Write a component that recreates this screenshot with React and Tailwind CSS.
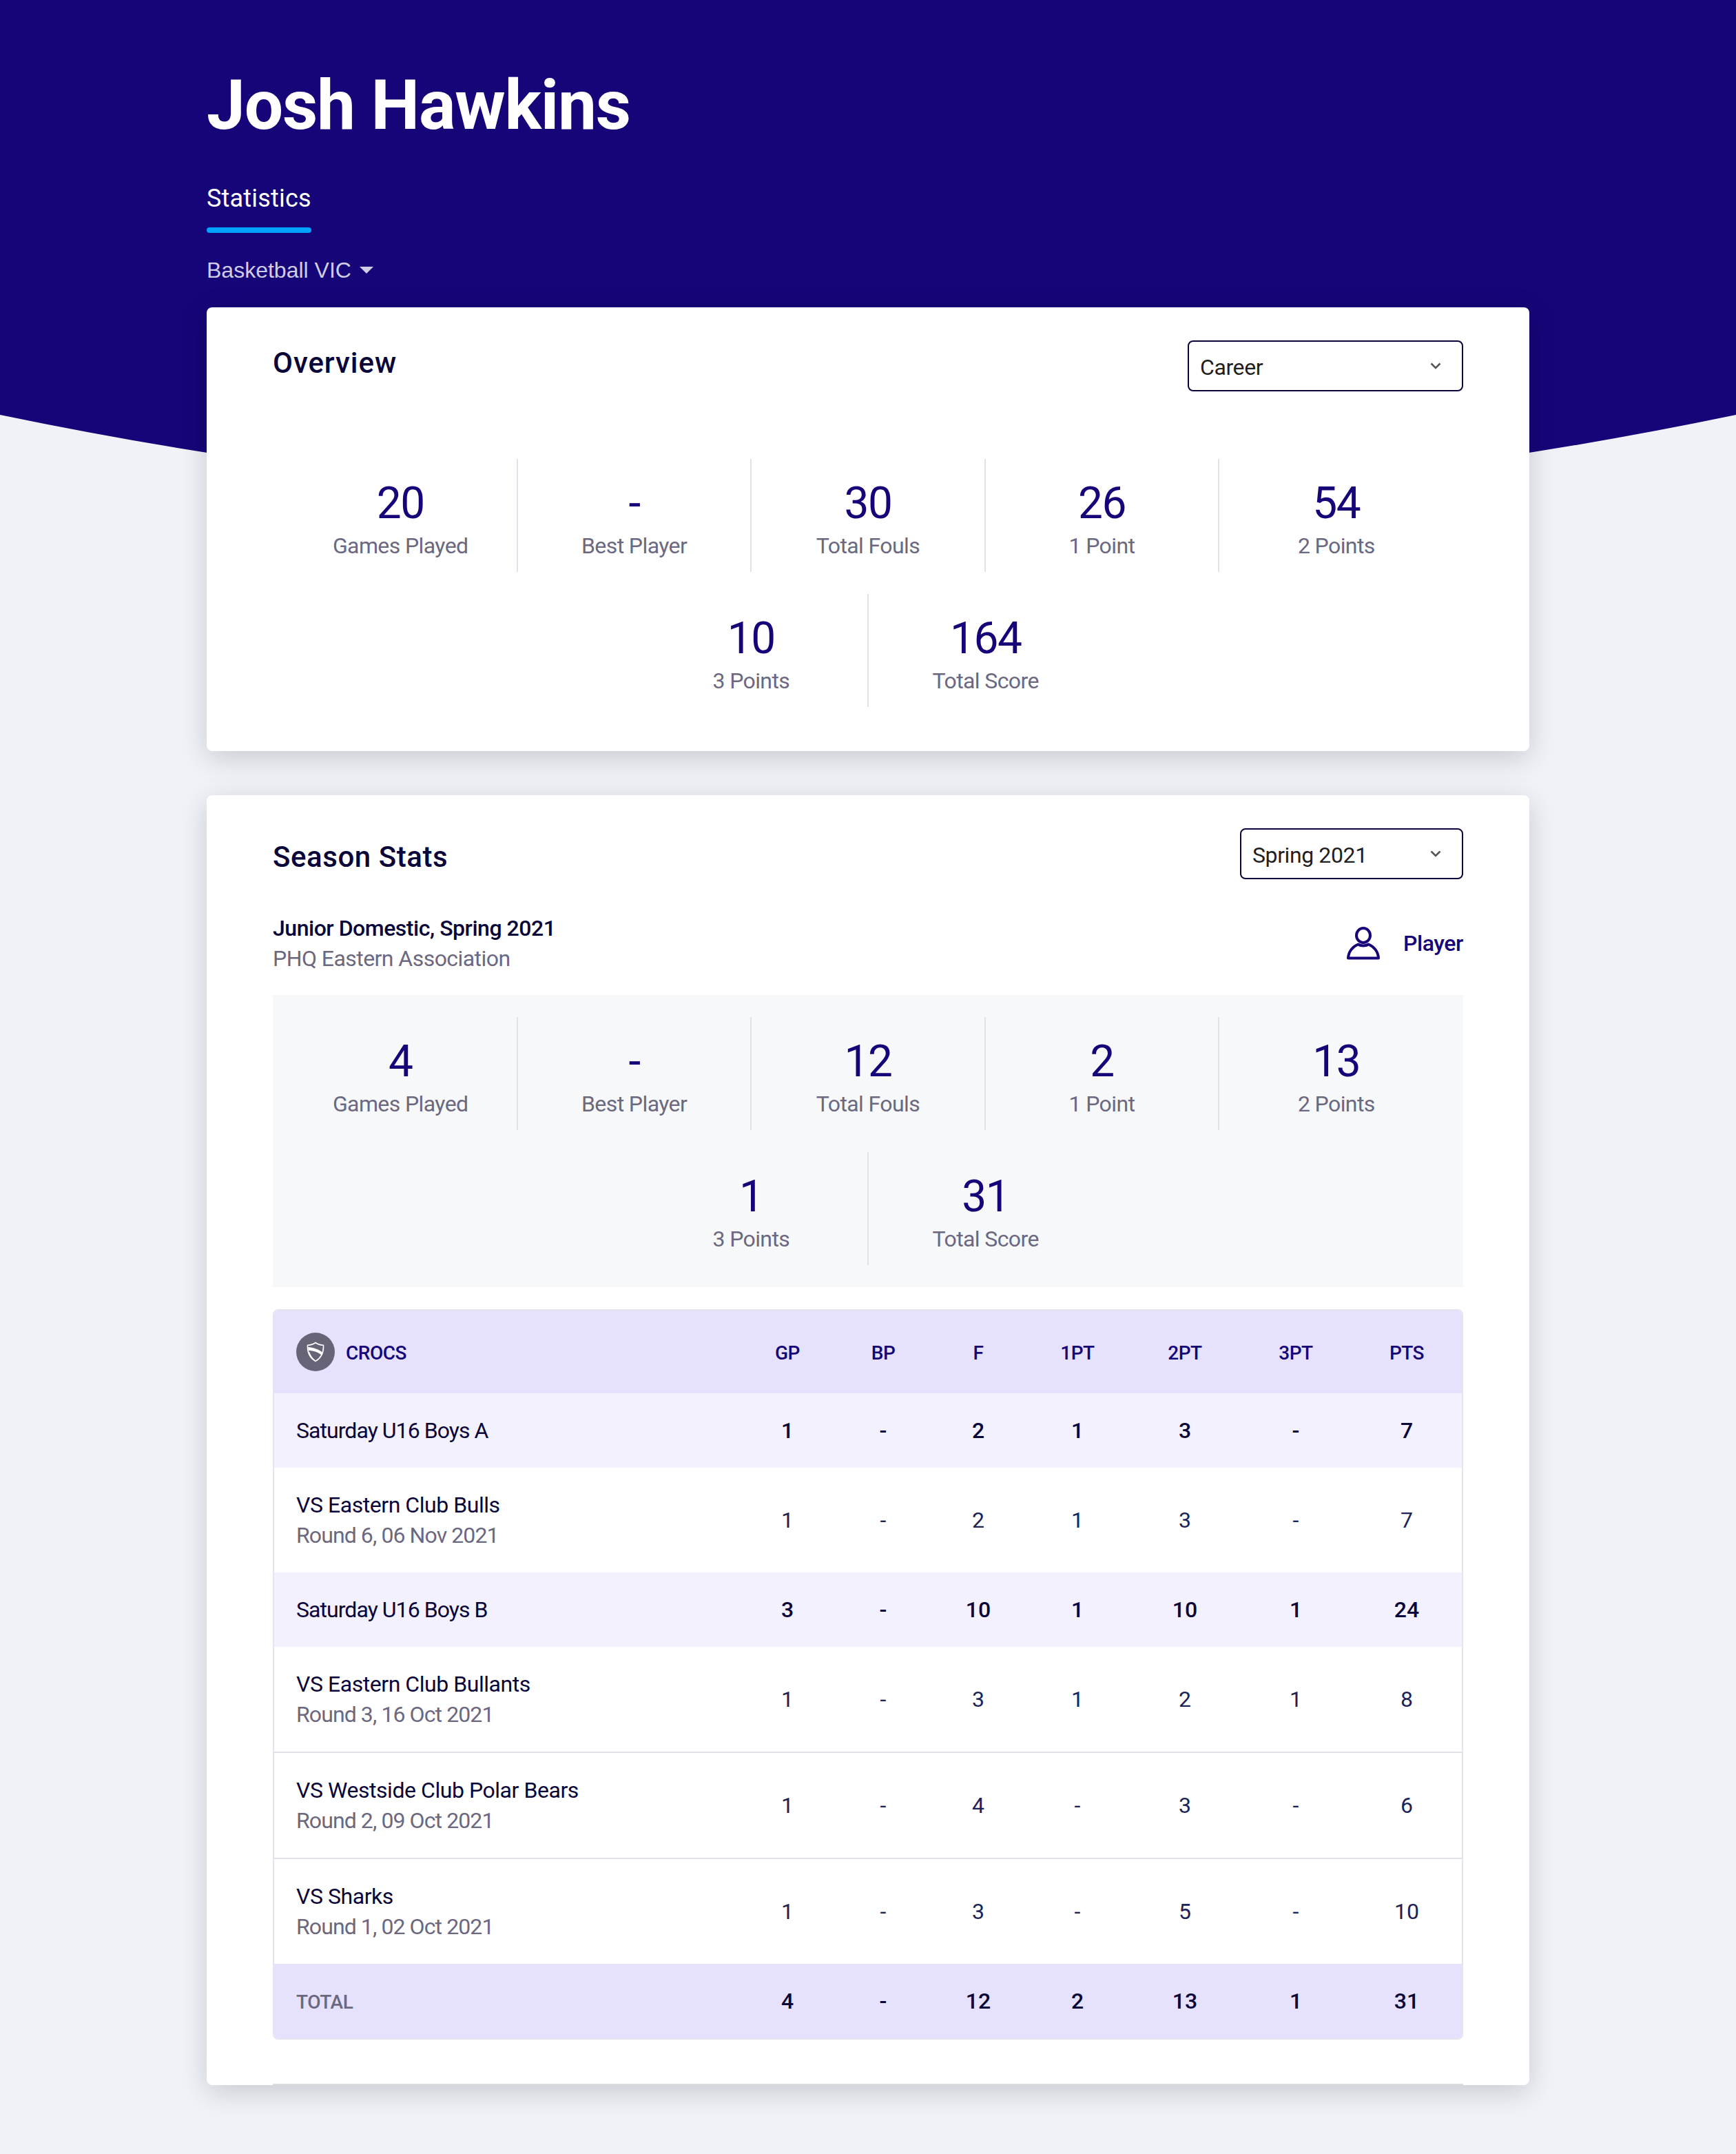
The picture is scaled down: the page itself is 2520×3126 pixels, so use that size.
const overview = [
  ["20", "Games Played"],
  ["-", "Best Player"],
  ["30", "Total Fouls"],
  ["26", "1 Point"],
  ["54", "2 Points"],
  ["10", "3 Points"],
  ["164", "Total Score"],
];
const season = [
  ["4", "Games Played"],
  ["-", "Best Player"],
  ["12", "Total Fouls"],
  ["2", "1 Point"],
  ["13", "2 Points"],
  ["1", "3 Points"],
  ["31", "Total Score"],
];
const cols = ["GP", "BP", "F", "1PT", "2PT", "3PT", "PTS"];
const rows = [
  { group: true, name: "Saturday U16 Boys A", v: ["1", "-", "2", "1", "3", "-", "7"] },
  { name: "VS Eastern Club Bulls", sub: "Round 6, 06 Nov 2021", v: ["1", "-", "2", "1", "3", "-", "7"] },
  { group: true, name: "Saturday U16 Boys B", v: ["3", "-", "10", "1", "10", "1", "24"] },
  { name: "VS Eastern Club Bullants", sub: "Round 3, 16 Oct 2021", v: ["1", "-", "3", "1", "2", "1", "8"], line: true },
  { name: "VS Westside Club Polar Bears", sub: "Round 2, 09 Oct 2021", v: ["1", "-", "4", "-", "3", "-", "6"], line: true },
  { name: "VS Sharks", sub: "Round 1, 02 Oct 2021", v: ["1", "-", "3", "-", "5", "-", "10"] },
];
const totals = ["4", "-", "12", "2", "13", "1", "31"];
const grid = "grid grid-cols-[676px_138px_140px_136px_152px_160px_162px_160px] items-center";

function Chevron() {
  return (
    <svg width="16" height="10" viewBox="0 0 16 10" fill="none" className="shrink-0">
      <path d="M1.5 1.5 L8 8 L14.5 1.5" stroke="#555555" strokeWidth="2.6" />
    </svg>
  );
}

function Select({ label, width }) {
  return (
    <div className={`${width} h-[74px] flex items-center justify-between pl-[16px] pr-[30px] border-2 border-[#0a0639] rounded-[8px] bg-white text-[32px] leading-[44px] font-[450] text-[#1f1f1f] tracking-[-0.4px]`}>
      <span className="pt-[3px]">{label}</span>
      <Chevron />
    </div>
  );
}

function Stats({ items }) {
  return (
    <div className="flex flex-wrap justify-center gap-y-[32px] pl-[2px]">
      {items.map(([n, l], i) => (
        <div
          key={l}
          className={
            i === 4 || i === 6
              ? "w-[339.4px] h-[164px] flex flex-col items-center pt-[29px]"
              : "w-[339.4px] h-[164px] flex flex-col items-center pt-[29px] border-r-2 border-[#dfe3ea]"
          }
        >
          <div className="text-[64px] leading-[72px] font-[450] text-[#150578] tracking-[-1.5px]">{n}</div>
          <div className="mt-[3px] text-[32px] leading-[44px] text-[#6b6880] tracking-[-0.6px]">{l}</div>
        </div>
      ))}
    </div>
  );
}

function Person() {
  return (
    <svg width="48" height="48" viewBox="0 0 48 48" fill="none">
      <ellipse cx="24" cy="12.5" rx="10" ry="10.5" stroke="#150578" strokeWidth="4" />
      <path
        d="M2 45.5 C2.5 35.5 9 28.5 16.5 25.5 C20.5 28.2 27.5 28.2 31.5 25.5 C39 28.5 45.5 35.5 46 45.5 Z"
        stroke="#150578"
        strokeWidth="4"
        strokeLinejoin="round"
      />
    </svg>
  );
}

function Shield() {
  return (
    <span className="w-[56px] h-[56px] rounded-full bg-[#686478] flex items-center justify-center shrink-0">
      <svg width="26" height="30" viewBox="0 0 26 30" fill="none">
        <path d="M13 1.5 C16 3.8 20 5 24.5 5.2 C25 15 21.5 23.5 13 28.5 C4.5 23.5 1 15 1.5 5.2 C6 5 10 3.8 13 1.5 Z" stroke="#ffffff" strokeWidth="1.6" strokeLinejoin="round" />
        <path d="M2 8 C10 8.5 18 11.5 24 16 L22.5 20 C17 15.5 10 13 3 13 Z" fill="#ffffff" />
        <path d="M4 14.5 C5.5 19 8 23.5 12 26.5 L13 28 C7.5 25 4.5 20 3.2 14.5 Z" fill="#ffffff" />
      </svg>
    </span>
  );
}

function Table() {
  return (
    <div className="mt-[32px] border-2 border-[#e2e5ec] rounded-[8px] overflow-hidden">
      <div className={`${grid} h-[120px] bg-[#e6e1fd] text-[28px] font-medium text-[#150578]`}>
        <div className="flex items-center gap-[16px] pl-[32px]">
          <Shield />
          <span className="pt-[3px] tracking-[-0.5px]">CROCS</span>
        </div>
        {cols.map((c) => (
          <div key={c} className="pt-[3px] text-center tracking-[-0.5px]">{c}</div>
        ))}
      </div>
      {rows.map((r) => (
        <div
          key={r.name}
          className={
            r.group
              ? `${grid} h-[108px] bg-[#f3f1fe] text-[32px] leading-[44px] text-[#0a0639]`
              : r.line
                ? `${grid} h-[154px] border-b-2 border-[#dfe1e6] bg-white text-[32px] leading-[44px] text-[#0a0639]`
                : `${grid} h-[152px] bg-white text-[32px] leading-[44px] text-[#0a0639]`
          }
        >
          <div className={r.group ? "pl-[32px] font-[450] tracking-[-0.95px]" : "pl-[32px] tracking-[-0.45px]"}>
            <div>{r.name}</div>
            {r.sub && <div className="text-[#6b6880] tracking-[-0.9px]">{r.sub}</div>}
          </div>
          {r.v.map((v, i) => (
            <div key={i} className={r.group ? "text-center font-medium" : "text-center text-[#1c2357]"}>{v}</div>
          ))}
        </div>
      ))}
      <div className={`${grid} h-[108px] bg-[#e6e1fd] text-[32px] font-medium text-[#0a0639]`}>
        <div className="pl-[32px] pt-[3px] text-[28px] text-[#6b6880] tracking-[-0.5px]">TOTAL</div>
        {totals.map((v, i) => (
          <div key={i} className="text-center">{v}</div>
        ))}
      </div>
    </div>
  );
}

export default function App() {
  return (
    <div className="relative min-h-[3126px] bg-[#eff2f7] font-['Roboto',sans-serif] overflow-hidden">
      <div className="absolute top-0 left-0 w-full">
        <div className="h-[602px] bg-[#150578]" />
        <svg width="2520" height="140" viewBox="0 0 2520 140" className="block">
          <path d="M0 0 L2520 0 Q1260 262 0 0 Z" fill="#150578" />
        </svg>
      </div>
      <div className="relative w-[1920px] mx-auto pb-[100px]">
        <header className="pt-[93px] pb-[33px]">
          <h1 className="text-[100px] leading-[120px] font-bold text-white tracking-[-1.2px]">Josh Hawkins</h1>
          <div className="mt-[51px] w-fit">
            <div className="pt-[2px] text-[36px] leading-[44px] text-white pb-[20px] tracking-[0.2px]">Statistics</div>
            <div className="h-[8px] rounded-full bg-[#00a2ff]" />
          </div>
          <div className="mt-[33px] flex items-center gap-[12px] text-[32px] leading-[44px] h-[42px] text-[#d0cde6] font-['Liberation_Sans',sans-serif]">
            <span>Basketball VIC</span>
            <svg width="20" height="10" viewBox="0 0 20 10"><path d="M0 0 L20 0 L10 10 Z" fill="#d0cde6" /></svg>
          </div>
        </header>

        <section className="bg-white rounded-[8px] shadow-[0_10px_40px_rgba(0,0,0,0.17)] px-[96px] pt-[48px] pb-[64px]">
          <div className="flex items-start justify-between">
            <h2 className="mt-[7px] text-[42px] leading-[52px] font-medium text-[#0a0639] tracking-[0.95px]">Overview</h2>
            <Select label="Career" width="w-[400px]" />
          </div>
          <div className="mt-[98px]">
            <Stats items={overview} />
          </div>
        </section>

        <section className="mt-[64px] bg-white rounded-[8px] shadow-[0_10px_40px_rgba(0,0,0,0.17)] px-[96px] pt-[48px]">
          <div className="flex items-start justify-between">
            <h2 className="mt-[16px] text-[42px] leading-[52px] font-medium text-[#0a0639] tracking-[0.55px]">Season Stats</h2>
            <Select label="Spring 2021" width="w-[324px]" />
          </div>
          <div className="mt-[49px] flex items-center justify-between">
            <div className="text-[32px] leading-[44px] tracking-[-0.47px]">
              <div className="font-medium text-[#0a0639]">Junior Domestic, Spring 2021</div>
              <div className="text-[#6b6880] tracking-[-0.55px]">PHQ Eastern Association</div>
            </div>
            <div className="flex items-center gap-[34px] text-[32px] font-medium text-[#150578] tracking-[-0.4px]">
              <Person />
              <span>Player</span>
            </div>
          </div>
          <div className="mt-[31px] bg-[#f7f8fa] py-[32px]">
            <Stats items={season} />
          </div>
          <Table />
          <div className="mt-[64px] h-[2px] bg-[#dcdcdc]" />
        </section>
      </div>
    </div>
  );
}
